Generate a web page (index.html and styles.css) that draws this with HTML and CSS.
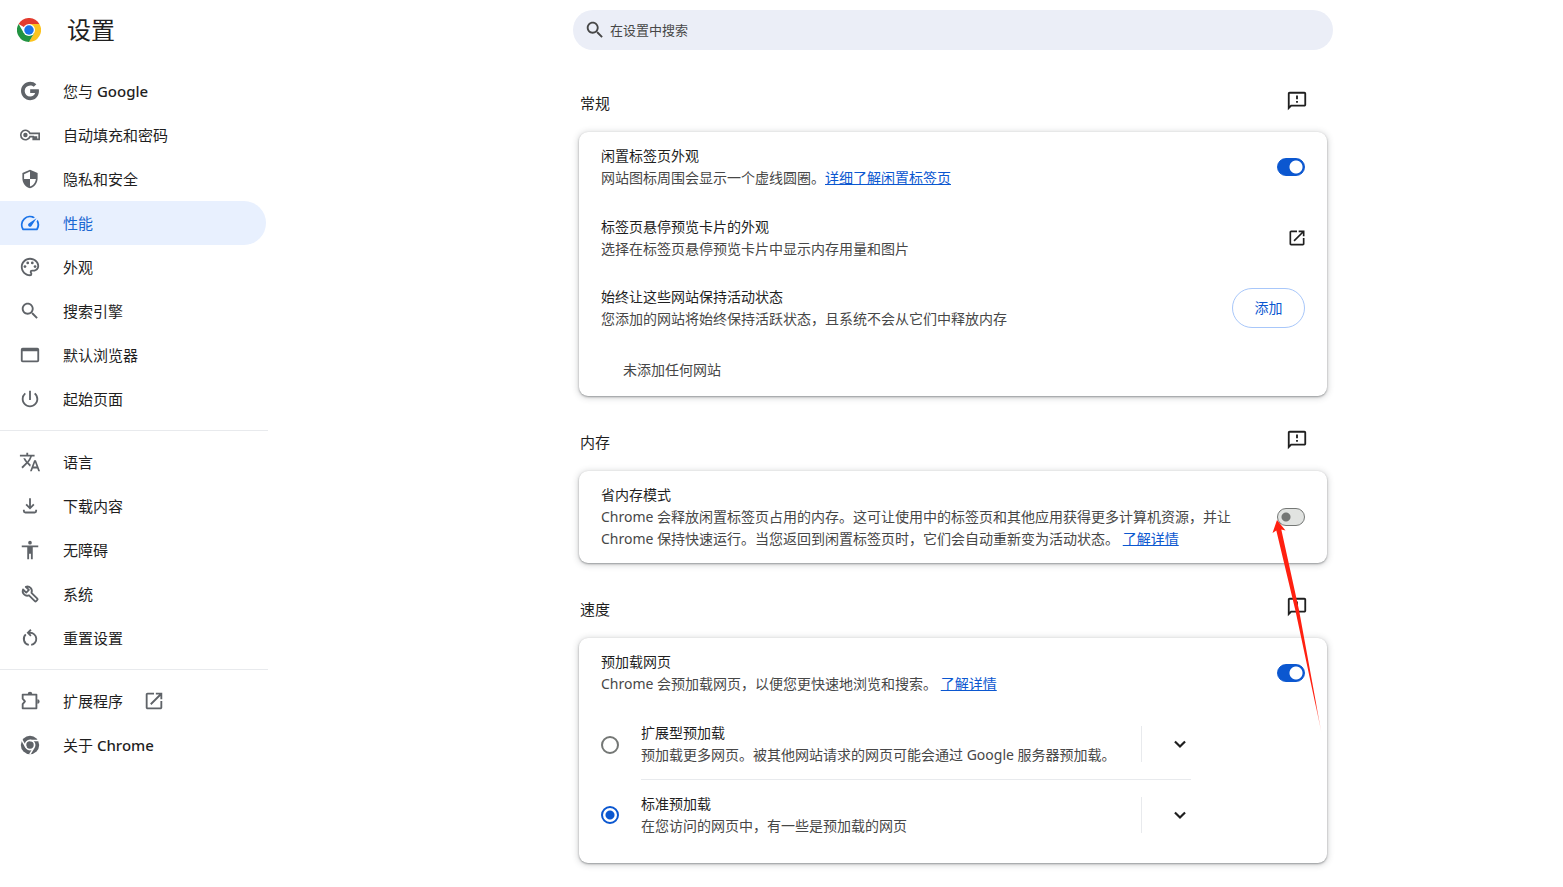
FILE: index.html
```html
<!DOCTYPE html>
<html lang="zh-CN">
<head>
<meta charset="utf-8">
<title>设置</title>
<link rel="stylesheet" href="styles.css">
</head>
<body>
<svg class="sprite" aria-hidden="true">
  <symbol id="search" viewBox="0 0 24 24"><path d="M15.5 14h-.79l-.28-.27C15.41 12.59 16 11.11 16 9.5 16 5.91 13.09 3 9.5 3S3 5.91 3 9.5 5.91 16 9.5 16c1.61 0 3.09-.59 4.23-1.57l.27.28v.79l5 4.99L20.49 19l-4.99-5zm-6 0C7.01 14 5 11.99 5 9.5S7.01 5 9.5 5 14 7.01 14 9.5 11.99 14 9.5 14z"/></symbol>
  <symbol id="feedback" viewBox="0 0 24 24"><path d="M20 2H4c-1.1 0-1.99.9-1.99 2L2 22l4-4h14c1.1 0 2-.9 2-2V4c0-1.1-.9-2-2-2zm0 14H5.17L4 17.17V4h16v12zm-9-4h2v2h-2zm0-6h2v4h-2z"/></symbol>
  <symbol id="open" viewBox="0 0 24 24"><path d="M19 19H5V5h7V3H5c-1.11 0-2 .9-2 2v14c0 1.1.89 2 2 2h14c1.1 0 2-.9 2-2v-7h-2v7zM14 3v2h3.59l-9.83 9.83 1.41 1.41L19 6.41V10h2V3h-7z"/></symbol>
  <symbol id="chevron" viewBox="0 0 24 24"><path d="M6.500 9.200l5.500 5.500 5.500-5.500" fill="none" stroke="currentColor" stroke-width="2.400"/></symbol>
</svg>

<div class="page">
  <aside class="sidebar">
    <header class="brand">
      <svg class="logo" viewBox="0 0 48 48" aria-hidden="true">
        <path fill="#e33b2e" d="M24 24L3.2 12A24 24 0 0 1 44.8 12H24z"/>
        <path fill="#fcc31e" d="M24 12h20.8A24 24 0 0 1 24 48L34.4 30z"/>
        <path fill="#229342" d="M34.4 30L24 48A24 24 0 0 1 3.2 12L13.6 30z"/>
        <circle cx="24" cy="24" r="12" fill="#fff"/>
        <circle cx="24" cy="24" r="9.5" fill="#1a73e8"/>
      </svg>
      <h1>设置</h1>
    </header>
    <nav aria-label="设置">
      <ul class="menu">
        <li><a class="item" href="#people"><svg class="icon" viewBox="0 0 24 24"><path d="M12.200 10.200v3.900h5.400c-.7 2.300-2.600 3.900-5.400 3.900a6 6 0 1 1 0-12c1.500 0 2.900.5 3.900 1.400l2.800-2.800A10 10 0 0 0 12.200 2C6.700 2 2.200 6.500 2.200 12s4.500 10 10 10c8.400 0 10.200-7.900 9.400-11.800z"/></svg><span>您与 <b>Google</b></span></a></li>
        <li><a class="item" href="#autofill"><svg class="icon" viewBox="0 0 24 24"><circle cx="7" cy="12" r="2.400"/><path fill="none" stroke="currentColor" stroke-width="1.800" d="M12 10.200A5.200 5.200 0 1 0 12 13.800H15.500v3h1.800v-2.500H19v2.500h3V10.200z"/></svg><span>自动填充和密码</span></a></li>
        <li><a class="item" href="#privacy"><svg class="icon" viewBox="0 0 26 26"><path fill-rule="evenodd" transform="translate(1 1)" d="M12 1L3 5v6c0 5.550 3.840 10.740 9 12 5.160-1.260 9-6.450 9-12V5zM12 12h7c-.53 4.120-3.280 7.790-7 8.940V12H5V6.300l7-3.110z"/></svg><span>隐私和安全</span></a></li>
        <li><a class="item selected" href="#performance" aria-current="page"><svg class="icon" viewBox="0 0 24 24"><path d="M20.380 8.570l-1.230 1.850a8 8 0 0 1-.22 7.580H5.070A8 8 0 0 1 15.580 6.850l1.850-1.230A10 10 0 0 0 3.350 19a2 2 0 0 0 1.720 1h13.850a2 2 0 0 0 1.740-1 10 10 0 0 0-.27-10.440zM10.590 15.410a2 2 0 0 0 2.830 0l5.660-8.490-8.490 5.660a2 2 0 0 0 0 2.830z"/></svg><span>性能</span></a></li>
        <li><a class="item" href="#appearance"><svg class="icon" viewBox="0 0 24 24"><path d="M12 22C6.490 22 2 17.510 2 12S6.490 2 12 2s10 4.040 10 9c0 3.310-2.690 6-6 6h-1.770c-.28 0-.5.22-.5.5 0 .12.05.23.13.33.41.47.64 1.060.64 1.670A2.500 2.500 0 0 1 12 22zm0-18c-4.410 0-8 3.590-8 8s3.590 8 8 8c.28 0 .5-.22.5-.5a.54.54 0 0 0-.14-.35c-.41-.46-.63-1.050-.63-1.650a2.500 2.500 0 0 1 2.500-2.500H16c2.210 0 4-1.790 4-4 0-3.860-3.590-7-8-7z"/><circle cx="6.500" cy="11.500" r="1.500"/><circle cx="9.500" cy="7.500" r="1.500"/><circle cx="14.500" cy="7.500" r="1.500"/><circle cx="17.500" cy="11.500" r="1.500"/></svg><span>外观</span></a></li>
        <li><a class="item" href="#search-engine"><svg class="icon"><use href="#search"/></svg><span>搜索引擎</span></a></li>
        <li><a class="item" href="#default-browser"><svg class="icon" viewBox="0 0 24 24"><path fill-rule="evenodd" d="M4 4h16a2 2 0 0 1 2 2v12a2 2 0 0 1-2 2H4a2 2 0 0 1-2-2V6a2 2 0 0 1 2-2zm0 4v10h16V8z"/></svg><span>默认浏览器</span></a></li>
        <li><a class="item" href="#startup"><svg class="icon" viewBox="0 0 24 24"><path d="M13 3h-2v10h2V3zm4.830 2.170l-1.420 1.420A6.920 6.920 0 0 1 19 12c0 3.870-3.130 7-7 7s-7-3.130-7-7c0-2.190 1.010-4.140 2.580-5.420L6.170 5.170A8.930 8.930 0 0 0 3 12c0 4.970 4.030 9 9 9s9-4.030 9-9c0-2.740-1.230-5.180-3.170-6.830z"/></svg><span>起始页面</span></a></li>
      </ul>
      <ul class="menu">
        <li><a class="item" href="#languages"><svg class="icon" viewBox="0 0 24 24"><path d="M12.870 15.070l-2.540-2.510.03-.03A17.500 17.500 0 0 0 14.070 6H17V4h-7V2H8v2H1v1.990h11.170C11.500 7.920 10.440 9.750 9 11.350 8.070 10.320 7.300 9.190 6.690 8h-2c.73 1.630 1.730 3.170 2.980 4.560l-5.090 5.020L4 19l5-5 3.110 3.110.76-2.040zM18.500 10h-2L12 22h2l1.120-3h4.750L21 22h2l-4.500-12zm-2.620 7l1.620-4.330L19.120 17h-3.240z"/></svg><span>语言</span></a></li>
        <li><a class="item" href="#downloads"><svg class="icon" viewBox="0 0 24 24"><path fill="none" stroke="currentColor" stroke-width="2" d="M12 3.500v11M7.800 10.300l4.200 4.200 4.200-4.200M5.300 16v1.500a1.600 1.600 0 0 0 1.600 1.600h10.200a1.600 1.600 0 0 0 1.600-1.600V16"/></svg><span>下载内容</span></a></li>
        <li><a class="item" href="#accessibility"><svg class="icon" viewBox="0 0 24 24"><path d="M12 2a2 2 0 1 1 0 4 2 2 0 0 1 0-4zm9 7h-6v13h-2v-6h-2v6H9V9H3V7h18v2z"/></svg><span>无障碍</span></a></li>
        <li><a class="item" href="#system"><svg class="icon" viewBox="0 0 24 24"><path fill="none" stroke="currentColor" stroke-width="2" stroke-linejoin="round" d="M7.400 4.200l3.400 3.400-2.900 2.900-3.500-3.400a4.900 4.900 0 0 0 6.500 6.300l6.400 6.400a1 1 0 0 0 1.400 0l1.300-1.300a1 1 0 0 0 0-1.400l-6.400-6.400a4.900 4.900 0 0 0-6.200-6.500z"/></svg><span>系统</span></a></li>
        <li><a class="item" href="#reset"><svg class="icon" viewBox="0 0 24 24"><path fill="none" stroke="currentColor" stroke-width="2" d="M10.500 6.300H12a6.700 6.700 0 0 1 1.300 13.300M10.700 19.600A6.700 6.700 0 0 1 7.400 8.100M13 3l-3.300 3.300L13 9.600"/></svg><span>重置设置</span></a></li>
      </ul>
      <ul class="menu">
        <li><a class="item" href="#extensions"><svg class="icon" viewBox="0 0 24 24"><path fill="none" stroke="currentColor" stroke-width="2" stroke-linejoin="round" d="M4 5h15v15H4v-4.500l2.500-3L4 9.500z"/><path d="M9.500 4.500a2.500 2.500 0 0 1 5 0zM20 10a2.500 2.500 0 0 1 0 5z"/></svg><span>扩展程序</span><svg class="icon external"><use href="#open"/></svg></a></li>
        <li><a class="item" href="#about"><svg class="icon" viewBox="0 0 24 24"><circle cx="12" cy="12" r="10"/><circle cx="12" cy="12" r="5" fill="none" stroke="#fff" stroke-width="1.900"/><path fill="none" stroke="#fff" stroke-width="1.700" d="M12 7h9M7.700 14.500L3.200 6.700M16.300 14.500L11.800 22.300"/></svg><span>关于 <b>Chrome</b></span></a></li>
      </ul>
    </nav>
  </aside>

  <main class="main">
    <div class="search" role="search">
      <svg class="icon"><use href="#search"/></svg>
      <input type="search" placeholder="在设置中搜索" aria-label="在设置中搜索">
    </div>

    <section class="section">
      <header class="section-head">
        <h2>常规</h2>
        <button class="icon-button" type="button" aria-label="反馈"><svg class="icon"><use href="#feedback"/></svg></button>
      </header>
      <div class="card">
        <div class="row">
          <div class="text">
            <label class="label" for="idle">闲置标签页外观</label>
            <p>网站图标周围会显示一个虚线圆圈。<a href="#idle-help">详细了解闲置标签页</a></p>
          </div>
          <input class="toggle" id="idle" type="checkbox" role="switch" checked>
        </div>
        <div class="row tight">
          <div class="text">
            <h3 class="label">标签页悬停预览卡片的外观</h3>
            <p>选择在标签页悬停预览卡片中显示内存用量和图片</p>
          </div>
          <a class="open-link" href="#hover-card" aria-label="标签页悬停预览卡片的外观"><svg class="icon"><use href="#open"/></svg></a>
        </div>
        <div class="row">
          <div class="text">
            <h3 class="label">始终让这些网站保持活动状态</h3>
            <p>您添加的网站将始终保持活跃状态，且系统不会从它们中释放内存</p>
          </div>
          <button class="add" type="button">添加</button>
        </div>
        <p class="empty">未添加任何网站</p>
      </div>
    </section>

    <section class="section">
      <header class="section-head">
        <h2>内存</h2>
        <button class="icon-button" type="button" aria-label="反馈"><svg class="icon"><use href="#feedback"/></svg></button>
      </header>
      <div class="card">
        <div class="row tight">
          <div class="text">
            <label class="label" for="memory">省内存模式</label>
            <p>Chrome 会释放闲置标签页占用的内存。这可让使用中的标签页和其他应用获得更多计算机资源，并让 Chrome 保持快速运行。当您返回到闲置标签页时，它们会自动重新变为活动状态。 <a href="#memory-help">了解详情</a></p>
          </div>
          <input class="toggle" id="memory" type="checkbox" role="switch">
        </div>
        <svg class="pointer" viewBox="0 0 50 214" aria-hidden="true">
          <defs>
            <linearGradient id="fade" x1="0" y1="0" x2="0" y2="1">
              <stop offset=".85" stop-color="#ff2010"/>
              <stop offset="1" stop-color="#ff2010" stop-opacity=".15"/>
            </linearGradient>
          </defs>
          <path fill="url(#fade)" d="M5 0L13.500 10.500L9.300 9.500L27 90L49.500 213L23.500 91L4.300 10.500L0.500 13z"/>
        </svg>
      </div>
    </section>

    <section class="section">
      <header class="section-head">
        <h2>速度</h2>
        <button class="icon-button" type="button" aria-label="反馈"><svg class="icon"><use href="#feedback"/></svg></button>
      </header>
      <div class="card">
        <div class="row">
          <div class="text">
            <label class="label" for="preload">预加载网页</label>
            <p>Chrome 会预加载网页，以便您更快速地浏览和搜索。 <a href="#preload-help">了解详情</a></p>
          </div>
          <input class="toggle" id="preload" type="checkbox" role="switch" checked>
        </div>
        <div class="options">
          <div class="option">
            <input class="radio" id="extended" type="radio" name="preload-mode">
            <div class="option-body">
              <div class="text">
                <label class="label" for="extended">扩展型预加载</label>
                <p>预加载更多网页。被其他网站请求的网页可能会通过 Google 服务器预加载。</p>
              </div>
              <div class="expand"><button class="chevron" type="button" aria-label="展开扩展型预加载"><svg class="icon"><use href="#chevron"/></svg></button></div>
            </div>
          </div>
          <div class="option">
            <input class="radio" id="standard" type="radio" name="preload-mode" checked>
            <div class="option-body">
              <div class="text">
                <label class="label" for="standard">标准预加载</label>
                <p>在您访问的网页中，有一些是预加载的网页</p>
              </div>
              <div class="expand"><button class="chevron" type="button" aria-label="展开标准预加载"><svg class="icon"><use href="#chevron"/></svg></button></div>
            </div>
          </div>
        </div>
      </div>
    </section>
  </main>
</div>
</body>
</html>
```

FILE: styles.css
```css
* {
  box-sizing: border-box;
}

body {
  margin: 0;
  background: #fff;
  color: #1f1f1f;
  font: 14px/22px "Noto Sans", "Noto Sans CJK SC", sans-serif;
}

h1, h2, h3, p, ul {
  margin: 0;
  padding: 0;
  font-weight: 400;
}

ul {
  list-style: none;
}

button {
  margin: 0;
  padding: 0;
  border: 0;
  background: none;
  color: inherit;
  font: inherit;
  cursor: pointer;
}

.sprite {
  display: none;
}

.icon {
  display: block;
  flex: none;
  width: 22px;
  height: 22px;
  fill: currentColor;
}

.page {
  display: flex;
}

/* Sidebar */
.sidebar {
  flex: none;
  width: 268px;
}

.brand {
  display: flex;
  align-items: center;
  gap: 26px;
  padding: 10px 17px 19px;
}

.logo {
  width: 24px;
  height: 24px;
}

.brand h1 {
  font-size: 24px;
  line-height: 40px;
}

.menu + .menu {
  margin-top: 9px;
  padding-top: 9px;
  border-top: 1px solid #e8eaed;
}

.item {
  display: flex;
  align-items: center;
  gap: 22px;
  height: 44px;
  margin-right: 2px;
  padding-left: 19px;
  border-radius: 0 22px 22px 0;
  color: #1f1f1f;
  font-size: 15px;
  text-decoration: none;
}

.item b {
  font-weight: 500;
}

.item .icon {
  color: #5f6368;
}

.item .external {
  margin-left: -2px;
}

.item.selected {
  background: #e8f0fe;
  color: #1967d2;
}

.item.selected .icon {
  color: #1a73e8;
}

/* Main column */
.main {
  flex: 1;
  min-width: 0;
  padding: 10px 0 24px 75px;
}

.search {
  display: flex;
  align-items: center;
  gap: 4px;
  max-width: 760px;
  height: 40px;
  margin: 0 auto 7px;
  padding: 0 11px;
  border-radius: 20px;
  background: #ebeef7;
  color: #474747;
}

.search input {
  flex: 1;
  min-width: 0;
  padding: 0;
  border: 0;
  outline: 0;
  background: none;
  color: #474747;
  font: inherit;
  font-size: 13px;
}

.search input::placeholder {
  color: #474747;
}

.section {
  max-width: 748px;
  margin: 0 auto;
}

.section-head {
  display: flex;
  align-items: flex-start;
  justify-content: space-between;
  padding: 31px 17px 14px 1px;
}

.section-head h2 {
  font-size: 15px;
  line-height: 30px;
}

.icon-button {
  padding: 2px;
}

.card {
  position: relative;
  border-radius: 9px;
  background: #fff;
  box-shadow: 0 1px 2px rgba(60, 64, 67, .45), 0 1px 6px 1px rgba(60, 64, 67, .22);
}

.row {
  display: flex;
  align-items: center;
  gap: 22px;
  padding: 13px 22px 14px;
}

.row.tight {
  padding-bottom: 13px;
}

.text {
  flex: 1;
  min-width: 0;
}

.label {
  display: block;
  font-size: 14px;
}

.text p,
.empty {
  color: #474747;
}

.text a {
  color: #0b57d0;
}

.open-link {
  margin-right: -2px;
  color: inherit;
}

.open-link .icon {
  width: 20px;
  height: 20px;
}

.add {
  width: 73px;
  height: 40px;
  border: 1px solid #a8c7fa;
  border-radius: 20px;
  color: #0b57d0;
}

.empty {
  padding: 15px 44px;
}

.toggle {
  flex: none;
  appearance: none;
  width: 28px;
  height: 18px;
  margin: 0;
  border: 1px solid #747775;
  border-radius: 9px;
  background: radial-gradient(circle at 8px 8px, #747775 4px, #e1e3e1 5px);
}

.toggle:checked {
  border-color: #0b57d0;
  background: radial-gradient(circle at 18px 8px, #fff 6px, #0b57d0 7px);
}

/* Preload options */
.options {
  padding: 0 136px 13px 22px;
}

.option {
  display: flex;
  align-items: center;
  gap: 22px;
}

.option-body {
  display: flex;
  flex: 1;
  align-items: center;
  min-width: 0;
  padding: 13px 0;
}

.option:not(:last-child) .option-body {
  border-bottom: 1px solid #e8eaed;
}

.radio {
  flex: none;
  appearance: none;
  width: 18px;
  height: 18px;
  margin: 0;
  border: 2px solid #747775;
  border-radius: 50%;
}

.radio:checked {
  border-color: #0b57d0;
  background: radial-gradient(circle, #0b57d0 4px, transparent 5px);
}

.expand {
  display: flex;
  align-items: center;
  height: 36px;
  padding-left: 27px;
  border-left: 1px solid #e8eaed;
}

/* Arrow drawn over the page */
.pointer {
  position: absolute;
  z-index: 1;
  top: 49px;
  right: 5px;
  width: 50px;
  height: 214px;
  pointer-events: none;
}
```
